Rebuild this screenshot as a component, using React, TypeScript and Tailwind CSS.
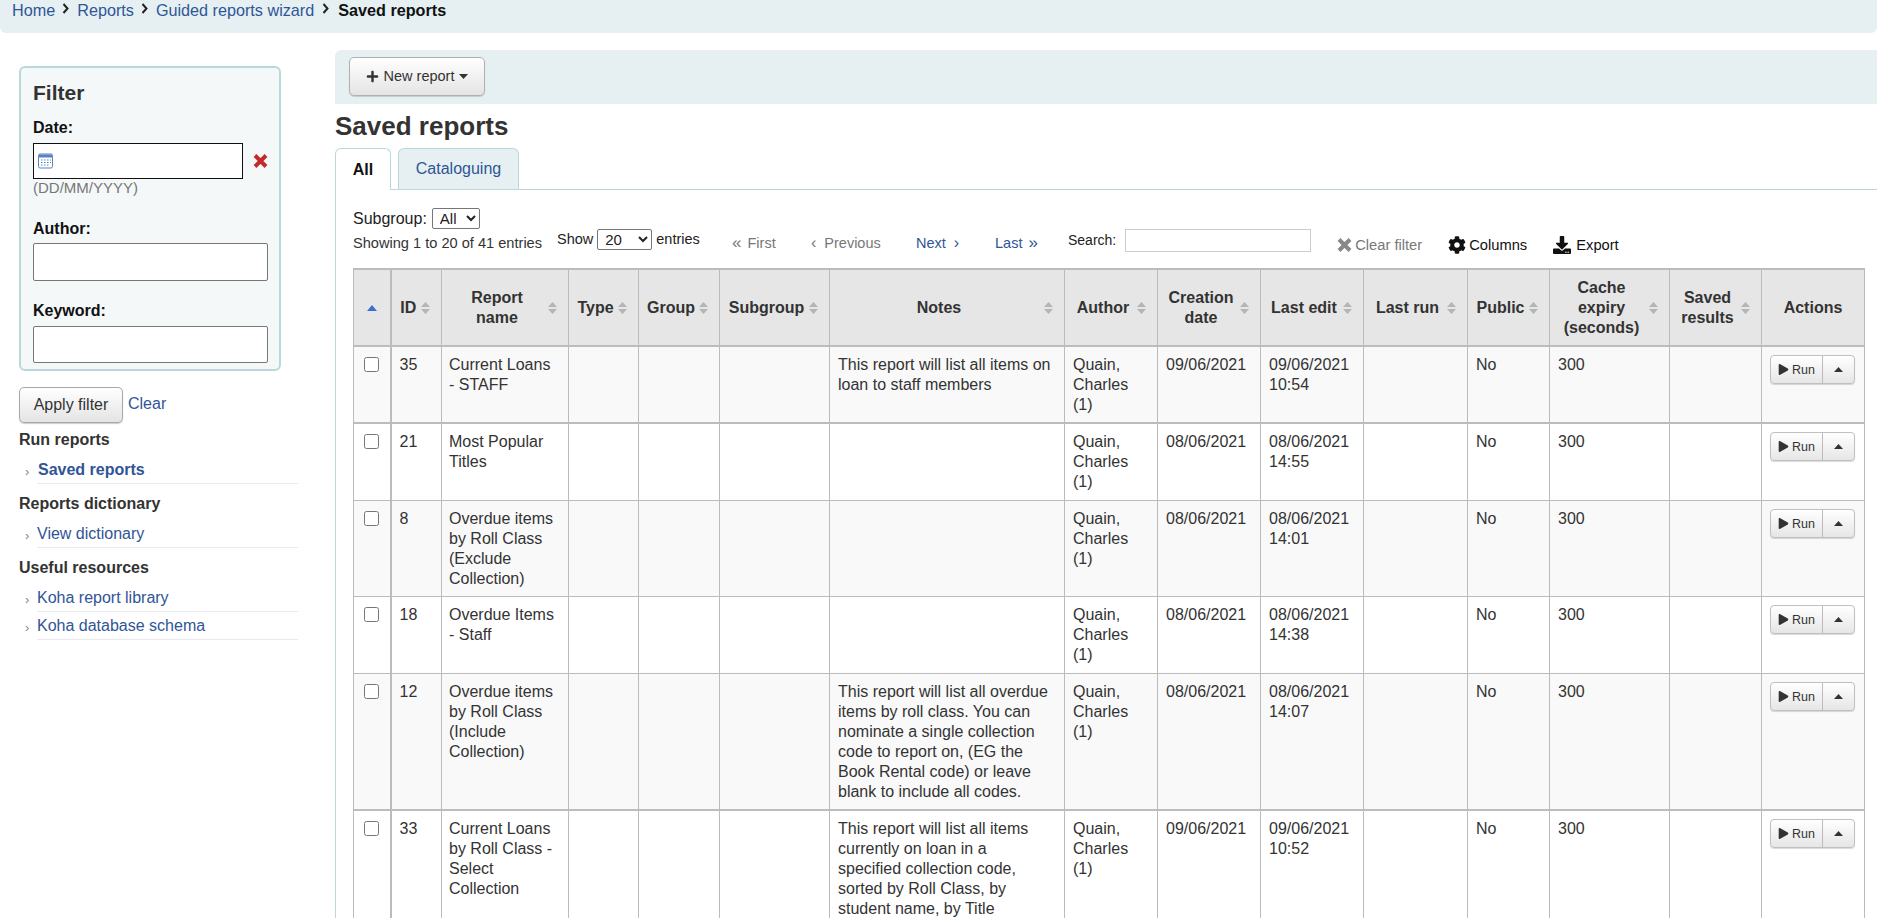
import { FaCog, FaDownload, FaPlay, FaPlus } from 'react-icons/fa'

const LINK = 'text-[#2f5597]'

const COLS = [
  'w-[37px]', 'w-[51px]', 'w-[127px]', 'w-[70px]', 'w-[81px]', 'w-[110px]', 'w-[235px]', 'w-[93px]',
  'w-[103px]', 'w-[103px]', 'w-[104px]', 'w-[82px]', 'w-[120px]', 'w-[92px]', 'w-[103px]',
]

const HEADERS = [
  'ID', 'Report name', 'Type', 'Group', 'Subgroup', 'Notes', 'Author', 'Creation date',
  'Last edit', 'Last run', 'Public', 'Cache expiry (seconds)', 'Saved results',
]

interface Report {
  id: number
  name: string
  notes: string
  created: string
  edited: string
  bottom: string
}

const REPORTS: Report[] = [
  { id: 35, name: 'Current Loans - STAFF', notes: 'This report will list all items on loan to staff members', created: '09/06/2021', edited: '09/06/2021 10:54', bottom: 'border-b-2 pb-[7px]' },
  { id: 21, name: 'Most Popular Titles', notes: '', created: '08/06/2021', edited: '08/06/2021 14:55', bottom: 'pb-[8px]' },
  { id: 8, name: 'Overdue items by Roll Class (Exclude Collection)', notes: '', created: '08/06/2021', edited: '08/06/2021 14:01', bottom: 'pb-[7px]' },
  { id: 18, name: 'Overdue Items - Staff', notes: '', created: '08/06/2021', edited: '08/06/2021 14:38', bottom: 'pb-[8px]' },
  { id: 12, name: 'Overdue items by Roll Class (Include Collection)', notes: 'This report will list all overdue items by roll class. You can nominate a single collection code to report on, (EG the Book Rental code) or leave blank to include all codes.', created: '08/06/2021', edited: '08/06/2021 14:07', bottom: 'border-b-2 pb-[7px]' },
  { id: 33, name: 'Current Loans by Roll Class - Select Collection', notes: 'This report will list all items currently on loan in a specified collection code, sorted by Roll Class, by student name, by Title', created: '09/06/2021', edited: '09/06/2021 10:52', bottom: 'pb-[8px]' },
]

function Chevron({ wide }: { wide?: boolean }) {
  return (
    <svg width="8" height="11" viewBox="0 0 8 11" className={`${wide ? 'mx-[8px]' : 'mx-[7px]'} mt-[3px] shrink-0`}>
      <path d="M1.5 1 L5.5 5.5 L1.5 10" fill="none" stroke="#222" strokeWidth="2" />
    </svg>
  )
}

function SortIcon() {
  return (
    <svg width="9" height="12" viewBox="0 0 9 12" className="absolute right-[11px] top-1/2 -translate-y-1/2">
      <path d="M4.5 0 L9 5 H0 Z M0 7 H9 L4.5 12 Z" fill="#b5b5b5" />
    </svg>
  )
}

function CalendarIcon() {
  return (
    <svg width="16" height="16" viewBox="0 0 16 16" className="absolute left-[5px] top-[10px]">
      <rect x="0.5" y="1" width="14" height="14" rx="1.5" fill="#fff" stroke="#5b82c0" />
      <rect x="1" y="1.5" width="13" height="3" fill="#5b82c0" />
      <path d="M3 7h1.5M6 7h1.5M9 7h1.5M12 7h1M3 9.5h1.5M6 9.5h1.5M9 9.5h1.5M12 9.5h1M3 12h1.5M6 12h1.5M9 12h1.5" stroke="#5b82c0" strokeWidth="1.2" />
    </svg>
  )
}

function XIcon({ className }: { className: string }) {
  return (
    <svg viewBox="0 0 15 14" className={className}>
      <path d="M2 1.5 L13 12.5 M13 1.5 L2 12.5" fill="none" stroke="currentColor" strokeWidth="4" />
    </svg>
  )
}

function Caret({ up }: { up?: boolean }) {
  return (
    <svg width="9" height="5" viewBox="0 0 9 5">
      <path d={up ? 'M4.5 0 L9 5 H0 Z' : 'M0 0 H9 L4.5 5 Z'} fill="#333" />
    </svg>
  )
}

function SideLink({ label, bold, gap }: { label: string; bold?: boolean; gap?: string }) {
  return (
    <li className={`ml-[18px] w-[261px] border-b border-[#eaeaea] leading-[20px] ${gap ?? ''}`}>
      <div className="relative">
        <span className="absolute -left-[12px] top-[2px] text-[13px] text-[#888]">›</span>
        <a className={`${LINK} ${bold ? 'pl-[1px] font-bold' : ''} block pb-[3px]`}>{label}</a>
      </div>
    </li>
  )
}

function Sidebar() {
  return (
    <aside className="w-[335px] shrink-0 pl-[19px] pt-[33px] text-[16px]">
      <div className="h-[305px] w-[262px] rounded-[6px] border-2 border-[#b9d8d9] bg-[#f4f8f9] pl-[12px] pt-[13px] text-[#111]">
        <h4 className="text-[21px] font-bold leading-[24px] text-[#333]">Filter</h4>
        <label className="mt-[13px] block font-bold leading-[20px]">Date:</label>
        <div className="relative mt-[5px] flex w-[235px] items-center">
          <CalendarIcon />
          <input className="h-[36px] w-[210px] border border-[#111] bg-white" />
          <XIcon className="ml-[10px] h-[14px] w-[15px] text-[#c12b2b]" />
        </div>
        <div className="text-[15px] leading-[18px] text-[#777]">(DD/MM/YYYY)</div>
        <label className="mt-[22px] block font-bold leading-[20px]">Author:</label>
        <input className="mt-[4px] block h-[38px] w-[235px] rounded-[2px] border border-[#767676] bg-white" />
        <label className="mt-[20px] block font-bold leading-[20px]">Keyword:</label>
        <input className="mt-[5px] block h-[37px] w-[235px] rounded-[2px] border border-[#767676] bg-white" />
      </div>
      <div className="mt-[16px] flex items-start">
        <button className="h-[36px] w-[104px] rounded-[5px] border border-[#a8a8a8] bg-gradient-to-b from-white to-[#e4e4e4] text-[#333] shadow-[0_1px_1px_rgba(0,0,0,0.2)]">Apply filter</button>
        <a className={`${LINK} ml-[5px] mt-[7px] leading-[20px]`}>Clear</a>
      </div>
      <h5 className="mt-[7px] font-bold leading-[20px] text-[#333]">Run reports</h5>
      <ul className="mt-[10px]">
        <SideLink label="Saved reports" bold />
      </ul>
      <h5 className="mt-[10px] font-bold leading-[20px] text-[#333]">Reports dictionary</h5>
      <ul className="mt-[10px]">
        <SideLink label="View dictionary" />
      </ul>
      <h5 className="mt-[10px] font-bold leading-[20px] text-[#333]">Useful resources</h5>
      <ul className="mt-[10px]">
        <SideLink label="Koha report library" />
        <SideLink label="Koha database schema" gap="pt-[4px]" />
      </ul>
    </aside>
  )
}

function Controls() {
  return (
    <div className="flex h-[78px] items-start pl-[17px] text-[#333]">
      <div className="w-[204px] shrink-0 pt-[18px]">
        <div className="flex h-[21px] items-center whitespace-nowrap text-[16px] text-[#222]">
          Subgroup:
          <select className="ml-[5px] h-[21px] w-[48px] rounded-[2px] border border-[#767676] pl-[3px] text-[15px]">
            <option>All</option>
          </select>
        </div>
        <div className="mt-[4px] whitespace-nowrap text-[14.6px] leading-[20px]">Showing 1 to 20 of 41 entries</div>
      </div>
      <div className="flex w-[175px] shrink-0 items-center whitespace-nowrap pt-[39px] text-[14.5px] text-[#222]">
        Show
        <select className="mx-[4px] h-[21px] w-[55px] rounded-[2px] border border-[#767676] pl-[3px] text-[15px]">
          <option>20</option>
        </select>
        entries
      </div>
      <div className="flex items-center whitespace-nowrap pt-[43px] text-[14.5px] leading-[20px]">
        <span className="flex w-[79px] text-[#777]"><span className="mr-[6px] text-[17px]">«</span>First</span>
        <span className="flex w-[105px] text-[#777]"><span className="mr-[8px] text-[16px]">‹</span>Previous</span>
        <a className={`${LINK} flex w-[79px]`}>Next<span className="ml-[8px] text-[16px]">›</span></a>
        <a className={`${LINK} flex w-[73px]`}>Last<span className="ml-[6px] text-[17px]">»</span></a>
      </div>
      <div className="flex items-center whitespace-nowrap pt-[39px] text-[14px] text-[#222]">
        Search:
        <input className="ml-[9px] h-[23px] w-[186px] border border-[#ccc] bg-white" />
      </div>
      <div className="flex items-center whitespace-nowrap pl-[26px] pt-[45px] text-[14.7px] leading-[20px]">
        <XIcon className="mr-[3px] h-[14px] w-[15px] text-[#888]" />
        <span className="w-[93px] text-[#777]">Clear filter</span>
        <FaCog className="mr-[3px] text-[#111]" size={18} />
        <span className="w-[84px] text-[#111]">Columns</span>
        <FaDownload className="mr-[5px] text-[#111]" size={18} />
        <span className="text-[#111]">Export</span>
      </div>
    </div>
  )
}

function RunButton() {
  return (
    <div className="flex h-[29px] w-[85px] rounded-[4px] border border-[#c0c0c0] bg-gradient-to-b from-white to-[#e6e6e6] text-[12.5px] text-[#333] shadow-[0_1px_1px_rgba(0,0,0,0.15)]">
      <span className="flex w-[52px] items-center justify-center gap-[3px] border-r border-[#bbb]">
        <FaPlay size={11} />
        Run
      </span>
      <span className="flex flex-1 items-center justify-center">
        <Caret up />
      </span>
    </div>
  )
}

function ReportsTable() {
  return (
    <table className="ml-[17px] w-[1511px] table-fixed border-collapse text-[16px] leading-[20px] text-[#333]">
      <colgroup>
        {COLS.map((c, i) => <col key={i} className={c} />)}
      </colgroup>
      <thead>
        <tr className="bg-[#e6e6e6]">
          <th className="relative border border-y-2 border-r-2 border-[#bcbcbc]">
            <svg width="10" height="6" viewBox="0 0 10 6" className="mx-auto">
              <path d="M5 0 L10 6 H0 Z" fill="#3b6fd4" />
            </svg>
          </th>
          {HEADERS.map(h => (
            <th key={h} className="relative border border-y-2 border-[#bcbcbc] pb-[7px] pl-[8px] pr-[24px] pt-[8px] text-center font-bold">
              {h}
              <SortIcon />
            </th>
          ))}
          <th className="border border-y-2 border-[#bcbcbc] px-[8px] pb-[7px] pt-[8px] text-center font-bold">Actions</th>
        </tr>
      </thead>
      <tbody>
        {REPORTS.map((r, i) => {
          const td = `border border-[#bcbcbc] px-[8px] pt-[8px] align-top ${r.bottom}`
          return (
            <tr key={r.id} className={i % 2 === 0 ? 'bg-[#f9f9f9]' : 'bg-white'}>
              <td className={`${td} !px-0 border-r-2 text-center`}>
                <input type="checkbox" className="mt-[2px] h-[15px] w-[15px]" />
              </td>
              <td className={td}>{r.id}</td>
              <td className={`${td} !pl-[7px]`}>{r.name}</td>
              <td className={td} />
              <td className={td} />
              <td className={td} />
              <td className={`${td} !pr-[11px]`}>{r.notes}</td>
              <td className={td}>Quain, Charles (1)</td>
              <td className={td}>{r.created}</td>
              <td className={td}>{r.edited}</td>
              <td className={td} />
              <td className={td}>No</td>
              <td className={td}>300</td>
              <td className={td} />
              <td className={td}><RunButton /></td>
            </tr>
          )
        })}
      </tbody>
    </table>
  )
}

export default function App() {
  return (
    <div className="h-[918px] w-[1877px] overflow-hidden bg-white font-['Liberation_Sans',Arial,sans-serif] text-[16px] text-[#333]">
      <nav className="flex h-[33px] items-start rounded-b-[6px] bg-[#e6f0f2] pl-[12px] text-[16.2px] leading-[20px]">
        <a className={LINK}>Home</a>
        <Chevron />
        <a className={LINK}>Reports</a>
        <Chevron />
        <a className={LINK}>Guided reports wizard</a>
        <Chevron wide />
        <span className="font-bold text-[#111]">Saved reports</span>
      </nav>
      <div className="flex">
        <Sidebar />
        <main className="min-w-0 flex-1 pt-[17px]">
          <div className="flex h-[54px] items-start rounded-tl-[6px] bg-[#e6f0f2] pl-[14px] pt-[7px]">
            <button className="flex h-[39px] w-[136px] items-center justify-center gap-[5px] rounded-[5px] border border-[#b0b0b0] bg-gradient-to-b from-white to-[#e4e4e4] text-[14.5px] text-[#333] shadow-[0_1px_1px_rgba(0,0,0,0.15)]">
              <FaPlus size={13} />
              New report
              <Caret />
            </button>
          </div>
          <h1 className="mt-[7px] text-[26px] font-bold leading-[30px] text-[#333]">Saved reports</h1>
          <div className="mt-[7px] flex h-[41px] items-end">
            <div className="z-10 -mb-px flex h-[42px] w-[56px] items-center justify-center rounded-t-[6px] border border-b-0 border-[#b9d8d9] bg-white font-bold text-[#111]">All</div>
            <div className="ml-[7px] flex h-[41px] w-[121px] items-center justify-center rounded-t-[6px] border border-b-0 border-[#b9d8d9] bg-[#e6f0f2] text-[#2f5597]">Cataloguing</div>
          </div>
          <div className="border-l border-t border-[#b9d8d9]">
            <Controls />
            <ReportsTable />
          </div>
        </main>
      </div>
    </div>
  )
}
